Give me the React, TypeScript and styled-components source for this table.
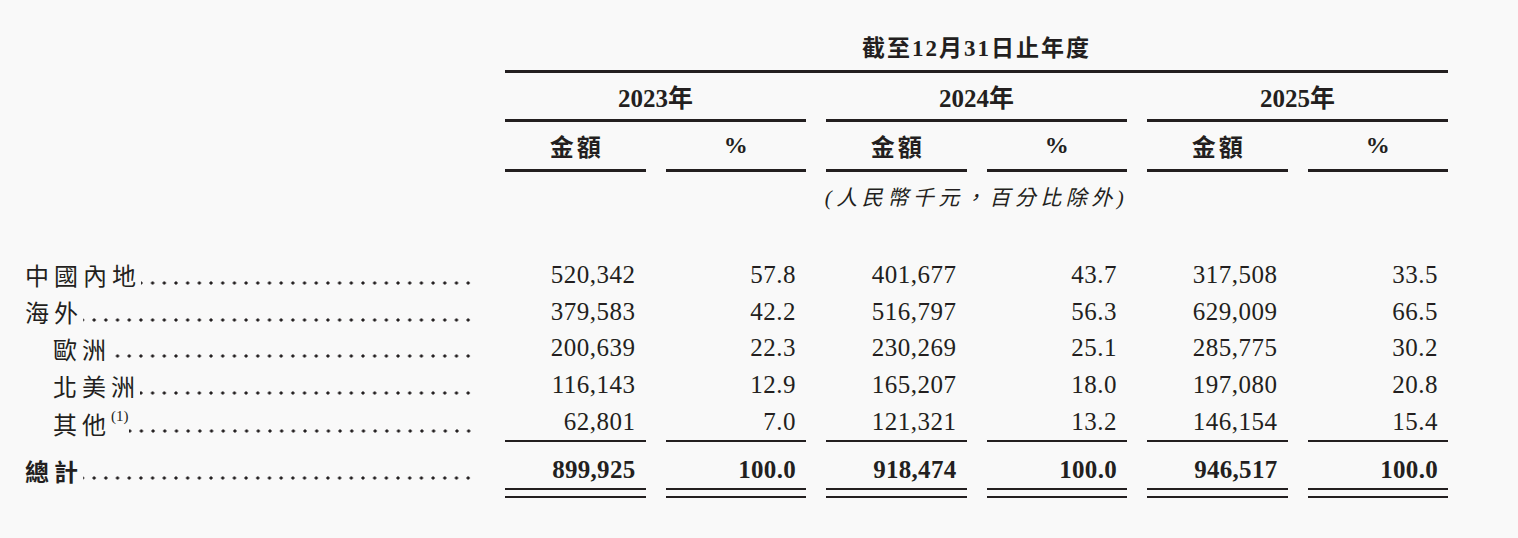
import React from 'react';
import styled, { createGlobalStyle } from 'styled-components';

const INK = '#231f20';

const Global = createGlobalStyle`
  html, body { margin: 0; padding: 0; background: #f9f9f9; }
  body {
    font-family: "Liberation Serif", "Noto Sans CJK TC", serif;
    color: ${INK};
  }
`;

const Page = styled.div`
  padding-left: 25px;
`;

const Table = styled.div`
  display: grid;
  grid-template-columns: 460px repeat(6, 140.5px);
  column-gap: 20px;
`;

const Blank = styled.div<{ $span?: number }>`
  grid-column: span ${(p) => p.$span ?? 1};
`;

const Title = styled.div`
  grid-column: span 6;
  height: 73px;
  box-sizing: border-box;
  padding-top: 22px;
  border-bottom: 3px solid ${INK};
  display: flex;
  align-items: center;
  justify-content: center;
  font-weight: 700;
  font-size: 23px;
  letter-spacing: 2px;
`;

const YearHead = styled.div`
  grid-column: span 2;
  height: 49px;
  box-sizing: border-box;
  border-bottom: 3px solid ${INK};
  display: flex;
  align-items: center;
  justify-content: center;
  font-weight: 700;
  font-size: 25px;
`;

const ColHead = styled.div`
  height: 49.5px;
  box-sizing: border-box;
  border-bottom: 3px solid ${INK};
  display: flex;
  align-items: center;
  justify-content: center;
  font-weight: 700;
  font-size: 24px;
  letter-spacing: 3px;
  padding-left: 3px;
`;

const Unit = styled.div`
  grid-column: span 2;
  height: 85px;
  box-sizing: border-box;
  padding-bottom: 36px;
  display: flex;
  align-items: center;
  justify-content: center;
  font-style: italic;
  font-size: 21px;
  letter-spacing: 4.5px;
  white-space: nowrap;
`;

const Label = styled.div<{ $indent?: boolean; $bold?: boolean; $h: number; $pt?: number }>`
  height: ${(p) => p.$h}px;
  box-sizing: border-box;
  padding-left: ${(p) => (p.$indent ? 28 : 0)}px;
  padding-right: 11px;
  padding-top: ${(p) => p.$pt ?? 0}px;
  padding-bottom: ${(p) => (p.$pt ? 10 : 0)}px;
  display: flex;
  align-items: center;
  font-size: 24px;
  letter-spacing: 5px;
  font-weight: ${(p) => (p.$bold ? 700 : 400)};
  white-space: nowrap;
`;

const Note = styled.span`
  font-size: 15px;
  letter-spacing: 0;
  align-self: flex-start;
  margin-top: 4px;
`;

const Leader = styled.span`
  flex: 1;
  height: 4px;
  margin-top: 16px;
  background-image: radial-gradient(circle at center, ${INK} 1.3px, transparent 1.9px);
  background-size: 11.7px 4px;
  background-position: right center;
  background-repeat: repeat-x;
`;

const Value = styled.div<{ $ruled?: boolean }>`
  height: ${(p) => (p.$ruled ? 38.8 : 36.8)}px;
  box-sizing: border-box;
  border-bottom: ${(p) => (p.$ruled ? `2px solid ${INK}` : 'none')};
  padding-right: 10px;
  display: flex;
  align-items: center;
  justify-content: flex-end;
  font-size: 25px;
  letter-spacing: 0.5px;
`;

const TotalCell = styled.div`
  display: flex;
  flex-direction: column;
  padding-top: 10px;
`;

const TotalValue = styled.div`
  height: 36px;
  padding-right: 10px;
  display: flex;
  align-items: center;
  justify-content: flex-end;
  font-size: 25px;
  font-weight: 700;
  letter-spacing: 0.3px;
`;

const DoubleRule = styled.div`
  height: 10px;
  box-sizing: border-box;
  border-top: 2px solid ${INK};
  border-bottom: 2px solid ${INK};
`;

type Row = {
  label: string;
  indent?: boolean;
  note?: string;
  ruled?: boolean;
  vals: string[];
};

const rows: Row[] = [
  { label: '中國內地', vals: ['520,342', '57.8', '401,677', '43.7', '317,508', '33.5'] },
  { label: '海外', vals: ['379,583', '42.2', '516,797', '56.3', '629,009', '66.5'] },
  { label: '歐洲', indent: true, vals: ['200,639', '22.3', '230,269', '25.1', '285,775', '30.2'] },
  { label: '北美洲', indent: true, vals: ['116,143', '12.9', '165,207', '18.0', '197,080', '20.8'] },
  {
    label: '其他',
    indent: true,
    note: '(1)',
    ruled: true,
    vals: ['62,801', '7.0', '121,321', '13.2', '146,154', '15.4'],
  },
];

const total = ['899,925', '100.0', '918,474', '100.0', '946,517', '100.0'];
const years = ['2023年', '2024年', '2025年'];

export default function App() {
  return (
    <>
      <Global />
      <Page>
        <Table>
          <Blank />
          <Title>截至12月31日止年度</Title>

          <Blank />
          {years.map((y) => (
            <YearHead key={y}>{y}</YearHead>
          ))}

          <Blank />
          {years.map((y) => (
            <React.Fragment key={y}>
              <ColHead>金額</ColHead>
              <ColHead>%</ColHead>
            </React.Fragment>
          ))}

          <Blank $span={3} />
          <Unit>(人民幣千元，百分比除外)</Unit>
          <Blank $span={2} />

          {rows.map((r) => (
            <React.Fragment key={r.label}>
              <Label $indent={r.indent} $h={r.ruled ? 38.8 : 36.8}>
                {r.label}
                {r.note && <Note>{r.note}</Note>}
                <Leader />
              </Label>
              {r.vals.map((v, i) => (
                <Value key={i} $ruled={r.ruled}>
                  {v}
                </Value>
              ))}
            </React.Fragment>
          ))}

          <Label $bold $h={56} $pt={10}>
            總計
            <Leader />
          </Label>
          {total.map((v, i) => (
            <TotalCell key={i}>
              <TotalValue>{v}</TotalValue>
              <DoubleRule />
            </TotalCell>
          ))}
        </Table>
      </Page>
    </>
  );
}
